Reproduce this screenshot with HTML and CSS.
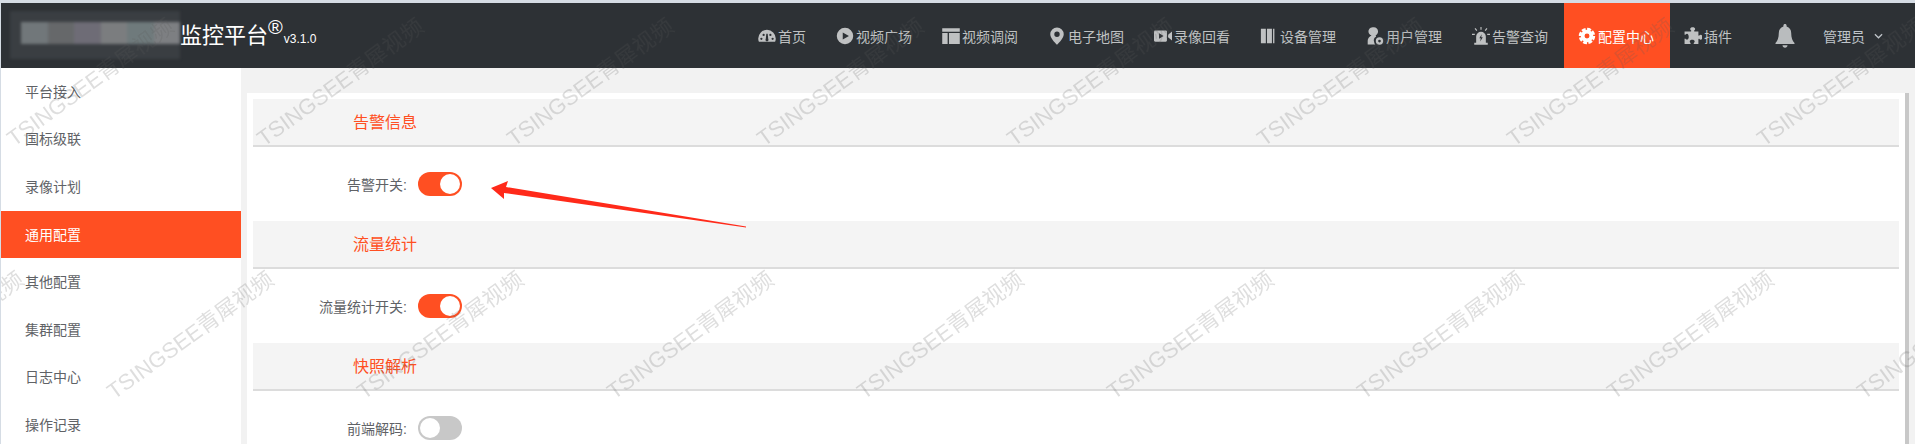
FILE: index.html
```html
<!DOCTYPE html>
<html lang="zh-CN">
<head>
  <meta charset="UTF-8" />
  <meta name="viewport" content="width=device-width, initial-scale=1" />
  <title>配置中心 - 监控平台</title>
  <link rel="stylesheet" href="styles.css">
</head>
<body>
  <header class="topbar">
    <div class="brand">
      <div class="logo-blur">
        <span class="tile t1"></span><span class="tile t2"></span><span class="tile t3"></span><span class="tile t4"></span><span class="tile t5"></span><span class="tile t6"></span>
      </div>
      <span class="brand-name">监控平台<sup class="reg">®</sup></span>
      <span class="brand-ver">v3.1.0</span>
    </div>

    <nav class="nav">
      <a class="nav-item">
        <svg class="ico" viewBox="0 0 16 16"><path fill-rule="evenodd" d="M8 2.5A7.8 7.8 0 0 0 .2 10.3c0 1 .2 2 .6 2.9h14.4c.4-.9.6-1.900.6-2.900A7.800 7.800 0 0 0 8 2.500zM3 9.500a1 1 0 1 1 0 2 1 1 0 0 1 0-2zm2-3.500a1 1 0 1 1 0 2 1 1 0 0 1 0-2zm6 0a1 1 0 1 1 0 2 1 1 0 0 1 0-2zm2 3.500a1 1 0 1 1 0 2 1 1 0 0 1 0-2zM8.600 6l.5 4.700a1.300 1.300 0 1 1-2.200 0L7.400 6z"/></svg>
        首页
      </a>
      <a class="nav-item">
        <svg class="ico" viewBox="0 0 16 16"><path fill-rule="evenodd" d="M8 .7a7.300 7.300 0 1 0 0 14.600A7.300 7.300 0 0 0 8 .7zM6 4.800l5.500 3.200L6 11.200z"/></svg>
        视频广场
      </a>
      <a class="nav-item">
        <svg class="ico" viewBox="0 0 16 16"><path d="M.2 1h15.600v3.200H.2zM.2 5.400h4.800V15H.2zM6.200 5.400h9.600V15H6.200z"/></svg>
        视频调阅
      </a>
      <a class="nav-item">
        <svg class="ico" viewBox="0 0 16 16"><path fill-rule="evenodd" d="M8 .4a6 6 0 0 0-6 6c0 3.800 6 9.400 6 9.400s6-5.600 6-9.400a6 6 0 0 0-6-6zm0 3.600a2.400 2.400 0 1 1 0 4.800A2.400 2.400 0 0 1 8 4z"/></svg>
        电子地图
      </a>
      <a class="nav-item">
        <svg class="ico" viewBox="0 0 16 16"><path fill-rule="evenodd" d="M1 3h9.500a1 1 0 0 1 1 1v8a1 1 0 0 1-1 1H1a1 1 0 0 1-1-1V4a1 1 0 0 1 1-1zm3.500 2.600v4.800L8.500 8zM12.500 6.800 16 4v8l-3.500-2.800z"/></svg>
        录像回看
      </a>
      <a class="nav-item">
        <svg class="ico" viewBox="0 0 16 16"><path d="M.8 1.500h4.400v13H.8zM6.200 1.500h4.400v13H6.200zM11.600 1.500h1.200v13h-1.200z"/></svg>
        设备管理
      </a>
      <a class="nav-item">
        <svg class="ico" viewBox="0 0 16 16"><path fill-rule="evenodd" d="M7 .3a3.700 3.700 0 0 1 3.700 3.700c0 1.500-.9 2.800-2.100 3.400l.4 1A3.800 3.800 0 0 0 7.200 13c0 1 .4 1.900 1 2.600H1.500v-3.400c0-2 1.300-3.700 3.400-4.700A3.700 3.700 0 0 1 7 .3z"/><path fill-rule="evenodd" d="M12 9.200a3.300 3.300 0 1 1 0 6.600 3.300 3.300 0 0 1 0-6.600zm0 2.100a1.200 1.200 0 1 0 0 2.400 1.200 1.200 0 0 0 0-2.400z"/></svg>
        用户管理
      </a>
      <a class="nav-item">
        <svg class="ico" viewBox="0 0 16 16"><path fill-rule="evenodd" d="M3.700 14V8.500a4.300 4.300 0 0 1 8.600 0V14H14v1.700H2V14zM8.600 6.500 6.500 10h1.300l-.5 2.800L9.600 9H8.200z"/><path d="M7.500 0h1v2.500h-1zM2.300 1.500l.8-.6 1.600 2-.8.600zM13.700 1.500l-.8-.6-1.600 2 .8.600zM0 6h2.500v1H0zM13.500 6H16v1h-2.500z"/></svg>
        告警查询
      </a>
      <a class="nav-item active">
        <svg class="ico" viewBox="0 0 16 16"><circle class="cog-teeth" cx="8" cy="8" r="6"/><path fill-rule="evenodd" d="M8 2.500a5.500 5.500 0 1 1 0 11 5.500 5.500 0 0 1 0-11zm0 3.300a2.200 2.200 0 1 0 0 4.400 2.200 2.200 0 0 0 0-4.400z"/></svg>
        配置中心
      </a>
      <a class="nav-item">
        <svg class="ico" viewBox="0 0 16 16"><path d="M6.300 3.200C5.700 2.600 5.500 2.200 5.500 1.700 5.500.8 6.500.2 7.700.2s2.200.6 2.200 1.500c0 .5-.2.9-.8 1.500-.3.400-.2.700.3.700h3.400v3.300c0 .5.400.6.700.3.500-.5.900-.7 1.400-.7.900 0 1.400 1 1.400 2.200s-.5 2.300-1.400 2.300c-.5 0-.9-.3-1.400-.8-.3-.3-.7-.1-.7.400v4.100H9c-.5 0-.6-.4-.3-.7.500-.5.800-.9.800-1.400 0-.9-1-1.500-2.200-1.500s-2.200.6-2.200 1.500c0 .5.200.9.700 1.400.3.300.2.700-.3.700H.5v-4.300c0-.5.400-.6.700-.3.500.5 1 .8 1.500.8.900 0 1.500-1 1.500-2.300S3.600 6.100 2.700 6.100c-.5 0-1 .2-1.500.7-.3.300-.7.200-.7-.3V3.900h5.500c.5 0 .6-.3.300-.7z"/></svg>
        插件
      </a>
    </nav>

    <svg class="bell" viewBox="0 0 20 24"><path d="M10 0c1 0 1.600.7 1.600 1.700v.7c3 .8 4.600 3.400 4.600 6.600 0 5 1.200 7.700 3.300 10V20H.5v-1c2.100-2.300 3.300-5 3.300-10 0-3.200 1.600-5.800 4.600-6.600v-.7C8.400.7 9 0 10 0z"/><path d="M7.500 21.200h5c0 1.500-1.100 2.500-2.500 2.500s-2.500-1-2.500-2.500z"/></svg>

    <div class="user">
      管理员
      <svg class="chevron" viewBox="0 0 10 6"><path d="M1 1l4 4 4-4"/></svg>
    </div>
  </header>

  <div class="layout">
    <aside class="sidebar">
      <a class="side-item">平台接入</a>
      <a class="side-item">国标级联</a>
      <a class="side-item">录像计划</a>
      <a class="side-item active">通用配置</a>
      <a class="side-item">其他配置</a>
      <a class="side-item">集群配置</a>
      <a class="side-item">日志中心</a>
      <a class="side-item">操作记录</a>
    </aside>

    <main class="content">
      <div class="panel">
        <section class="group">
          <h2 class="group-title">告警信息</h2>
          <div class="row">
            <label class="row-label">告警开关:</label>
            <span class="switch on"><i class="knob"></i></span>
          </div>
        </section>
        <section class="group">
          <h2 class="group-title">流量统计</h2>
          <div class="row">
            <label class="row-label">流量统计开关:</label>
            <span class="switch on"><i class="knob"></i></span>
          </div>
        </section>
        <section class="group">
          <h2 class="group-title">快照解析</h2>
          <div class="row">
            <label class="row-label">前端解码:</label>
            <span class="switch"><i class="knob"></i></span>
          </div>
        </section>
      </div>
      <div class="scroll-thumb"></div>
    </main>
  </div>

  <!-- 截图上画的红色箭头 -->
  <svg class="overlay" width="1915" height="444">
    <polygon class="arrow" points="491,188 508,181 506,187 746,226.500 746,227.500 504,193 504,199"/>
  </svg>

  <!-- 水印 -->
  <svg class="overlay" width="1915" height="444">
    <defs>
      <pattern id="wm" patternUnits="userSpaceOnUse" width="250" height="500">
        <text class="wm-text" transform="translate(14 147) rotate(-36)">TSINGSEE青犀视频</text>
        <text class="wm-text" transform="translate(114 400) rotate(-36)">TSINGSEE青犀视频</text>
        <text class="wm-text" transform="translate(-136 400) rotate(-36)">TSINGSEE青犀视频</text>
      </pattern>
    </defs>
    <rect width="1915" height="444" fill="url(#wm)"/>
  </svg>
</body>
</html>
```

FILE: styles.css
```css
* {
  box-sizing: border-box;
}
html, body {
  margin: 0;
  height: 100%;
  overflow: hidden;
}
body {
  position: relative;
  font-family: "Liberation Sans", "Noto Sans CJK SC", sans-serif;
  font-size: 14px;
  background: #f2f2f2;
  color: #606266;
  border-top: 3px solid #d5dce4;
  border-left: 1px solid #d5dce4;
}

/* top bar */
.topbar {
  display: flex;
  align-items: center;
  height: 65px;
  background: #2d3135;
  color: #bfc1c2;
}
.brand {
  display: flex;
  align-items: center;
  width: 743px;
  flex: none;
  color: #fff;
}
.logo-blur {
  display: grid;
  grid-template-columns: 11px repeat(6, 1fr);
  grid-template-rows: 11px 22px 15px;
  width: 170px;
  height: 48px;
  margin: 0 0 2px 9px;
  background: #3a3e42;
  filter: blur(1.5px);
}
.tile {
  grid-row: 2;
}
.t1 { grid-column: 2; background: #71777a; }
.t2 { grid-column: 3; background: #66686a; }
.t3 { grid-column: 4; background: #6e6c76; }
.t4 { grid-column: 5; background: #7b7d7f; }
.t5 { grid-column: 6; background: #6f7a7c; }
.t6 { grid-column: 7; background: #7d7f82; }
.brand-name {
  flex: none;
  font-size: 22px;
  line-height: 30px;
  white-space: nowrap;
}
.reg {
  font-size: 20px;
  line-height: 0;
  vertical-align: 9px;
}
.brand-ver {
  margin: 7px 0 0 1px;
  font-size: 12px;
}
.nav {
  display: flex;
  height: 100%;
}
.nav-item {
  display: flex;
  align-items: center;
  gap: 2px;
  padding: 0 16px 0 14px;
  cursor: pointer;
}
.nav-item.active {
  background: #ff4f22;
  color: #fff;
}
.ico {
  width: 18px;
  height: 18px;
  fill: currentColor;
}
.cog-teeth {
  fill: none;
  stroke: currentColor;
  stroke-width: 2.6px;
  stroke-dasharray: 3.400 1.300;
}
.bell {
  width: 20px;
  height: 24px;
  margin-left: 27px;
  fill: #b9bcbe;
}
.user {
  display: flex;
  align-items: center;
  margin-left: 28px;
  color: #bfc4c9;
}
.chevron {
  width: 9px;
  height: 6px;
  margin-left: 9px;
  fill: none;
  stroke: #bfc4c9;
  stroke-width: 1.400;
}

/* left menu */
.layout {
  display: flex;
  height: 376px;
}
.sidebar {
  width: 240px;
  flex: none;
  background: #fff;
}
.side-item {
  display: flex;
  align-items: center;
  height: 47.6px;
  padding: 0 0 2px 24px;
  cursor: pointer;
}
.side-item.active {
  background: #ff4f22;
  color: #fff;
}

/* settings panel */
.content {
  display: flex;
  flex: 1;
  min-width: 0;
  padding: 25px 6px 0;
}
.panel {
  flex: 1;
  padding: 6px 6px 0;
  background: #fff;
}
.scroll-thumb {
  width: 4px;
  background: #c8c8c8;
}
.group-title {
  height: 48px;
  margin: 0;
  padding-left: 100px;
  background: #f4f4f4;
  border-bottom: 2px solid #dcdcdc;
  color: #ff4f22;
  font-size: 16px;
  font-weight: normal;
  line-height: 48px;
}
.row {
  display: flex;
  align-items: center;
  gap: 11px;
  height: 74px;
}
.row-label {
  width: 154px;
  padding-bottom: 1px;
  text-align: right;
}
.switch {
  display: flex;
  width: 44px;
  height: 24px;
  padding: 2px;
  border-radius: 12px;
  background: #c8c8c8;
}
.switch.on {
  justify-content: flex-end;
  background: #ff4f22;
}
.knob {
  width: 20px;
  height: 20px;
  border-radius: 50%;
  background: #fff;
}

/* things drawn over the page */
.overlay {
  position: absolute;
  top: -3px;
  left: -1px;
  pointer-events: none;
}
.arrow {
  fill: #ff2a1a;
}
.wm-text {
  font-family: "Liberation Sans", "Noto Sans CJK SC", sans-serif;
  font-size: 22px;
  fill: rgba(90, 90, 90, 0.2);
}
```
